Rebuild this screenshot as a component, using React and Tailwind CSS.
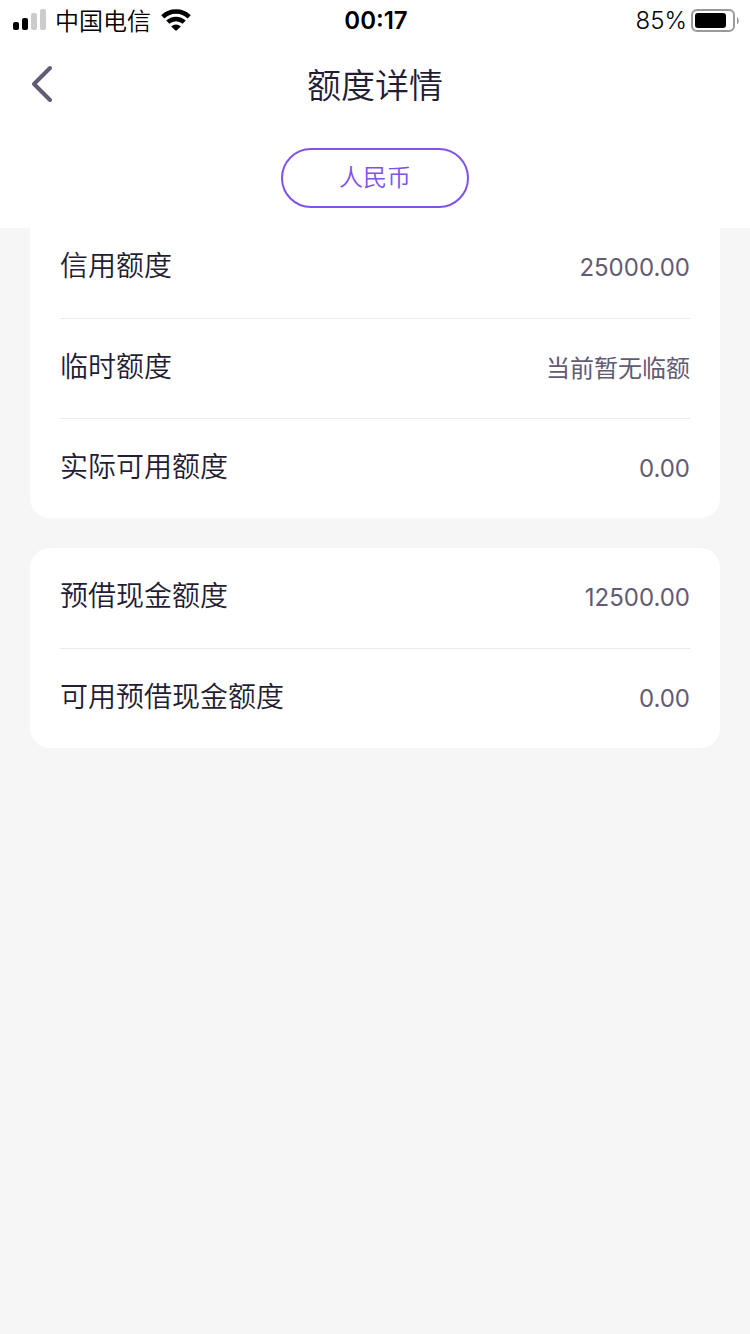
const groups = [
  [
    { label: '信用额度', value: '25000.00' },
    { label: '临时额度', value: '当前暂无临额' },
    { label: '实际可用额度', value: '0.00' },
  ],
  [
    { label: '预借现金额度', value: '12500.00' },
    { label: '可用预借现金额度', value: '0.00' },
  ],
]

function SignalIcon() {
  return (
    <svg className="w-[34px] h-[22px]" viewBox="0 0 34 22">
      <rect x="0" y="13" width="6" height="8" rx="2" fill="#000" />
      <rect x="9" y="9" width="6" height="12" rx="2" fill="#000" />
      <rect x="18" y="4" width="6" height="17" rx="2" fill="#ccc" />
      <rect x="27" y="0" width="6" height="21" rx="2" fill="#ccc" />
    </svg>
  )
}

function WifiIcon() {
  return (
    <svg className="w-[30px] h-[22px]" viewBox="0 0 30 22" fill="none" stroke="#000" strokeWidth="4.500">
      <path d="M1.800 7.800a19 19 0 0 1 26.400 0" />
      <path d="M6.800 13.200a12 12 0 0 1 16.400 0" />
      <path d="M15 22l-4.800-4.600a6.800 6.800 0 0 1 9.600 0z" fill="#000" stroke="none" />
    </svg>
  )
}

function BatteryIcon() {
  return (
    <svg className="w-[48px] h-[23px]" viewBox="0 0 48 23">
      <rect x="1" y="1" width="42" height="21" rx="5" fill="none" stroke="#999" strokeWidth="2" />
      <rect x="4" y="4" width="31" height="15" rx="3" fill="#000" />
      <path d="M46 8c2.400 1.500 2.400 6 0 7.500z" fill="#999" />
    </svg>
  )
}

function StatusBar() {
  return (
    <div className="grid grid-cols-3 items-center h-10 pl-[13px] pr-[11px] text-2xl text-black">
      <div className="flex items-center">
        <SignalIcon />
        <span className="ml-2 pt-[3px] font-[350]">中国电信</span>
        <span className="ml-[10px]">
          <WifiIcon />
        </span>
      </div>
      <span className="pt-[2px] text-center font-semibold">00:17</span>
      <div className="flex items-center justify-end gap-1">
        <span className="pt-[2px] font-[350]">85%</span>
        <BatteryIcon />
      </div>
    </div>
  )
}

function LimitRow({ label, value }) {
  return (
    <div className="flex items-center justify-between h-[100px] border-t border-[#ebebeb] first:border-t-0">
      <dt className="pb-1 text-[28px] leading-10 font-[350] text-[#231c33]">{label}</dt>
      <dd className="text-2xl text-[#625b73]">{value}</dd>
    </div>
  )
}

export default function App() {
  return (
    <div className="min-h-screen bg-[#f6f6f6] font-['Inter','Noto_Sans_CJK_SC',sans-serif]" lang="zh-CN">
      <header className="sticky top-0 z-10 bg-white pb-5">
        <StatusBar />
        <div className="grid grid-cols-[80px_1fr_80px] items-center h-[88px]">
          <button type="button" aria-label="返回" className="flex items-center h-full pl-[30px]">
            <svg className="w-6 h-10" viewBox="0 0 24 40" fill="none" stroke="#625b73" strokeWidth="4" strokeLinecap="round" strokeLinejoin="round">
              <path d="M20 4L4 20l16 16" />
            </svg>
          </button>
          <h1 className="pt-[3px] text-center text-[34px] leading-12 font-[350] text-[#231c33]">额度详情</h1>
        </div>
        <div className="flex justify-center pt-5">
          <button type="button" className="w-[188px] h-[60px] rounded-full border-2 border-[#8152ea] text-2xl font-[350] text-[#8152ea]">
            人民币
          </button>
        </div>
      </header>

      {/* first card is scrolled slightly under the header */}
      <main className="-mt-[10px] px-[30px] space-y-[30px]">
        {groups.map((rows, i) => (
          <dl key={i} className="bg-white rounded-[20px] px-[30px] first:rounded-t-none">
            {rows.map((row) => (
              <LimitRow key={row.label} {...row} />
            ))}
          </dl>
        ))}
      </main>
    </div>
  )
}
